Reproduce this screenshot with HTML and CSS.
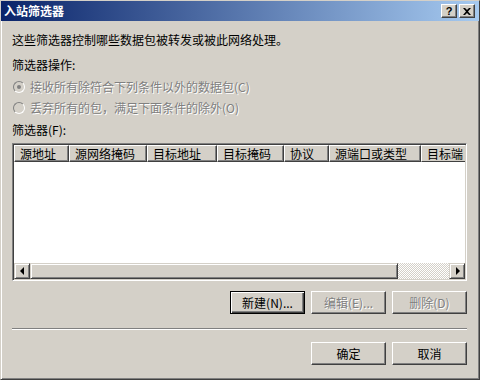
FILE: index.html
```html
<!DOCTYPE html>
<html lang="zh-CN">

<head>
    <meta charset="UTF-8">
    <title>入站筛选器</title>
    <link rel="stylesheet" href="styles.css">
</head>

<body>
    <div class="dialog">
        <div class="titlebar">
            <span class="title">入站筛选器</span>
            <div class="caption-btns">
                <span class="cap-btn">?</span>
                <span class="cap-btn close">
                    <svg width="8" height="7" viewBox="0 0 8 7"><path d="M0 0h2l2 2 2-2h2L5 3.5 8 7H6L4 5 2 7H0l3-3.5z" fill="#000"/></svg>
                </span>
            </div>
        </div>

        <div class="content">
            <p class="intro">这些筛选器控制哪些数据包被转发或被此网络处理。</p>
            <p class="label label-op">筛选器操作:</p>

            <div class="radio-row disabled first">
                <span class="radio checked"></span>
                <span class="radio-text">接收所有除符合下列条件以外的数据包(C)</span>
            </div>
            <div class="radio-row disabled second">
                <span class="radio"></span>
                <span class="radio-text">丢弃所有的包，满足下面条件的除外(O)</span>
            </div>

            <p class="label label-list">筛选器(F):</p>

            <div class="listview">
                <div class="lv-header">
                    <div class="col" style="width: 55px">源地址</div>
                    <div class="col" style="width: 78px">源网络掩码</div>
                    <div class="col" style="width: 70px">目标地址</div>
                    <div class="col" style="width: 67px">目标掩码</div>
                    <div class="col" style="width: 45px">协议</div>
                    <div class="col" style="width: 92px">源端口或类型</div>
                    <div class="col last">目标端</div>
                </div>
                <div class="lv-body"></div>
                <div class="hscroll">
                    <span class="sb-btn"><span class="arrow-left"></span></span>
                    <span class="sb-thumb"></span>
                    <span class="sb-track"></span>
                    <span class="sb-btn"><span class="arrow-right"></span></span>
                </div>
            </div>

            <div class="btn-row list-btns">
                <button class="btn default">新建(N)...</button>
                <button class="btn" disabled>编辑(E)...</button>
                <button class="btn" disabled>删除(D)</button>
            </div>

            <div class="separator"></div>

            <div class="btn-row footer-btns">
                <button class="btn">确定</button>
                <button class="btn">取消</button>
            </div>
        </div>
    </div>
</body>

</html>
```

FILE: styles.css
```css
* {
    padding: 0;
    margin: 0;
    box-sizing: border-box;
}

body {
    font-family: "Noto Sans CJK SC", "DejaVu Sans", sans-serif;
    font-size: 12px;
    color: #000;
    background-color: #d4d0c8;
}

.dialog {
    width: 480px;
    height: 380px;
    background-color: #d4d0c8;
    border: 1px solid;
    border-color: #d4d0c8 #404040 #404040 #d4d0c8;
    box-shadow: inset 1px 1px #fff, inset -1px -1px #808080;
}

/* title bar */
.titlebar {
    height: 20px;
    display: flex;
    align-items: center;
    justify-content: space-between;
    padding: 0 4px 0 3px;
    background: linear-gradient(to right, #0a246a, #a6caf0);
}

.title {
    color: #fff;
    font-weight: bold;
    font-size: 12px;
    line-height: 14px;
}

.caption-btns {
    display: flex;
    gap: 2px;
}

.cap-btn {
    width: 16px;
    height: 14px;
    display: flex;
    align-items: center;
    justify-content: center;
    background-color: #d4d0c8;
    border: 1px solid;
    border-color: #fff #404040 #404040 #fff;
    box-shadow: inset -1px -1px #808080;
    font-family: "Liberation Sans", sans-serif;
    font-weight: bold;
    font-size: 11px;
    line-height: 1;
}

/* body */
.content {
    padding: 0 12px 0 11px;
}

.intro,
.label,
.radio-row {
    line-height: 16px;
    height: 16px;
}

.intro {
    margin-top: 11px;
}

.label-op {
    margin-top: 9px;
}

.radio-row {
    display: flex;
    align-items: center;
    gap: 5px;
    padding-left: 1px;
}

.radio-row.first {
    margin-top: 6px;
}

.radio-row.second {
    margin-top: 5px;
}

.radio {
    position: relative;
    width: 12px;
    height: 12px;
    border-radius: 50%;
    border: 1px solid;
    border-color: #808080 #fff #fff #808080;
    background-color: #d4d0c8;
}

.radio.checked::after {
    content: "";
    position: absolute;
    left: 3px;
    top: 3px;
    width: 4px;
    height: 4px;
    border-radius: 50%;
    background-color: #808080;
}

.disabled .radio-text {
    color: #808080;
    text-shadow: 1px 1px 0 #fff;
}

.label-list {
    margin-top: 6px;
}

/* list view */
.listview {
    margin-top: 5px;
    height: 138px;
    display: flex;
    flex-direction: column;
    background-color: #fff;
    border: 1px solid;
    border-color: #808080 #fff #fff #808080;
    box-shadow: inset 1px 1px #404040, inset -1px -1px #d4d0c8;
    padding: 1px;
    overflow: hidden;
}

.lv-header {
    display: flex;
    height: 17px;
    flex-shrink: 0;
    overflow: hidden;
}

.col {
    flex-shrink: 0;
    height: 17px;
    line-height: 15px;
    padding-left: 5px;
    white-space: nowrap;
    overflow: hidden;
    background-color: #d4d0c8;
    border: 1px solid;
    border-color: #fff #404040 #404040 #fff;
    box-shadow: inset -1px -1px #808080;
}

.col.last {
    flex: 1;
    border-right: none;
    box-shadow: none;
}

.lv-body {
    flex: 1;
}

.hscroll {
    display: flex;
    height: 16px;
    flex-shrink: 0;
}

.sb-btn,
.sb-thumb {
    background-color: #d4d0c8;
    border: 1px solid;
    border-color: #d4d0c8 #404040 #404040 #d4d0c8;
    box-shadow: inset 1px 1px #fff, inset -1px -1px #808080;
}

.sb-btn {
    width: 16px;
    display: flex;
    align-items: center;
    justify-content: center;
}

.sb-thumb {
    width: 368px;
}

.sb-track {
    flex: 1;
    background: repeating-conic-gradient(#fff 0 25%, #d4d0c8 0 50%) 0 0 / 2px 2px;
}

.arrow-left {
    border-top: 4px solid transparent;
    border-bottom: 4px solid transparent;
    border-right: 4px solid #000;
    margin-right: 1px;
}

.arrow-right {
    border-top: 4px solid transparent;
    border-bottom: 4px solid transparent;
    border-left: 4px solid #000;
    margin-left: 1px;
}

/* buttons */
.btn-row {
    display: flex;
    justify-content: flex-end;
    gap: 6px;
}

.list-btns {
    margin-top: 10px;
}

.footer-btns {
    margin-top: 12px;
}

.btn {
    width: 75px;
    height: 23px;
    font-family: "Noto Sans CJK SC", "DejaVu Sans", sans-serif;
    font-size: 12px;
    line-height: 14px;
    color: #000;
    background-color: #d4d0c8;
    border: 1px solid;
    border-color: #fff #404040 #404040 #fff;
    box-shadow: inset -1px -1px #808080;
}

.btn.default {
    border: 1px solid #000;
    box-shadow: inset 1px 1px #fff, inset -1px -1px #404040, inset -2px -2px #808080;
}

.btn:disabled {
    color: #808080;
    text-shadow: 1px 1px 0 #fff;
}

.separator {
    margin-top: 14px;
    height: 2px;
    border-top: 1px solid #808080;
    border-bottom: 1px solid #fff;
}
```
